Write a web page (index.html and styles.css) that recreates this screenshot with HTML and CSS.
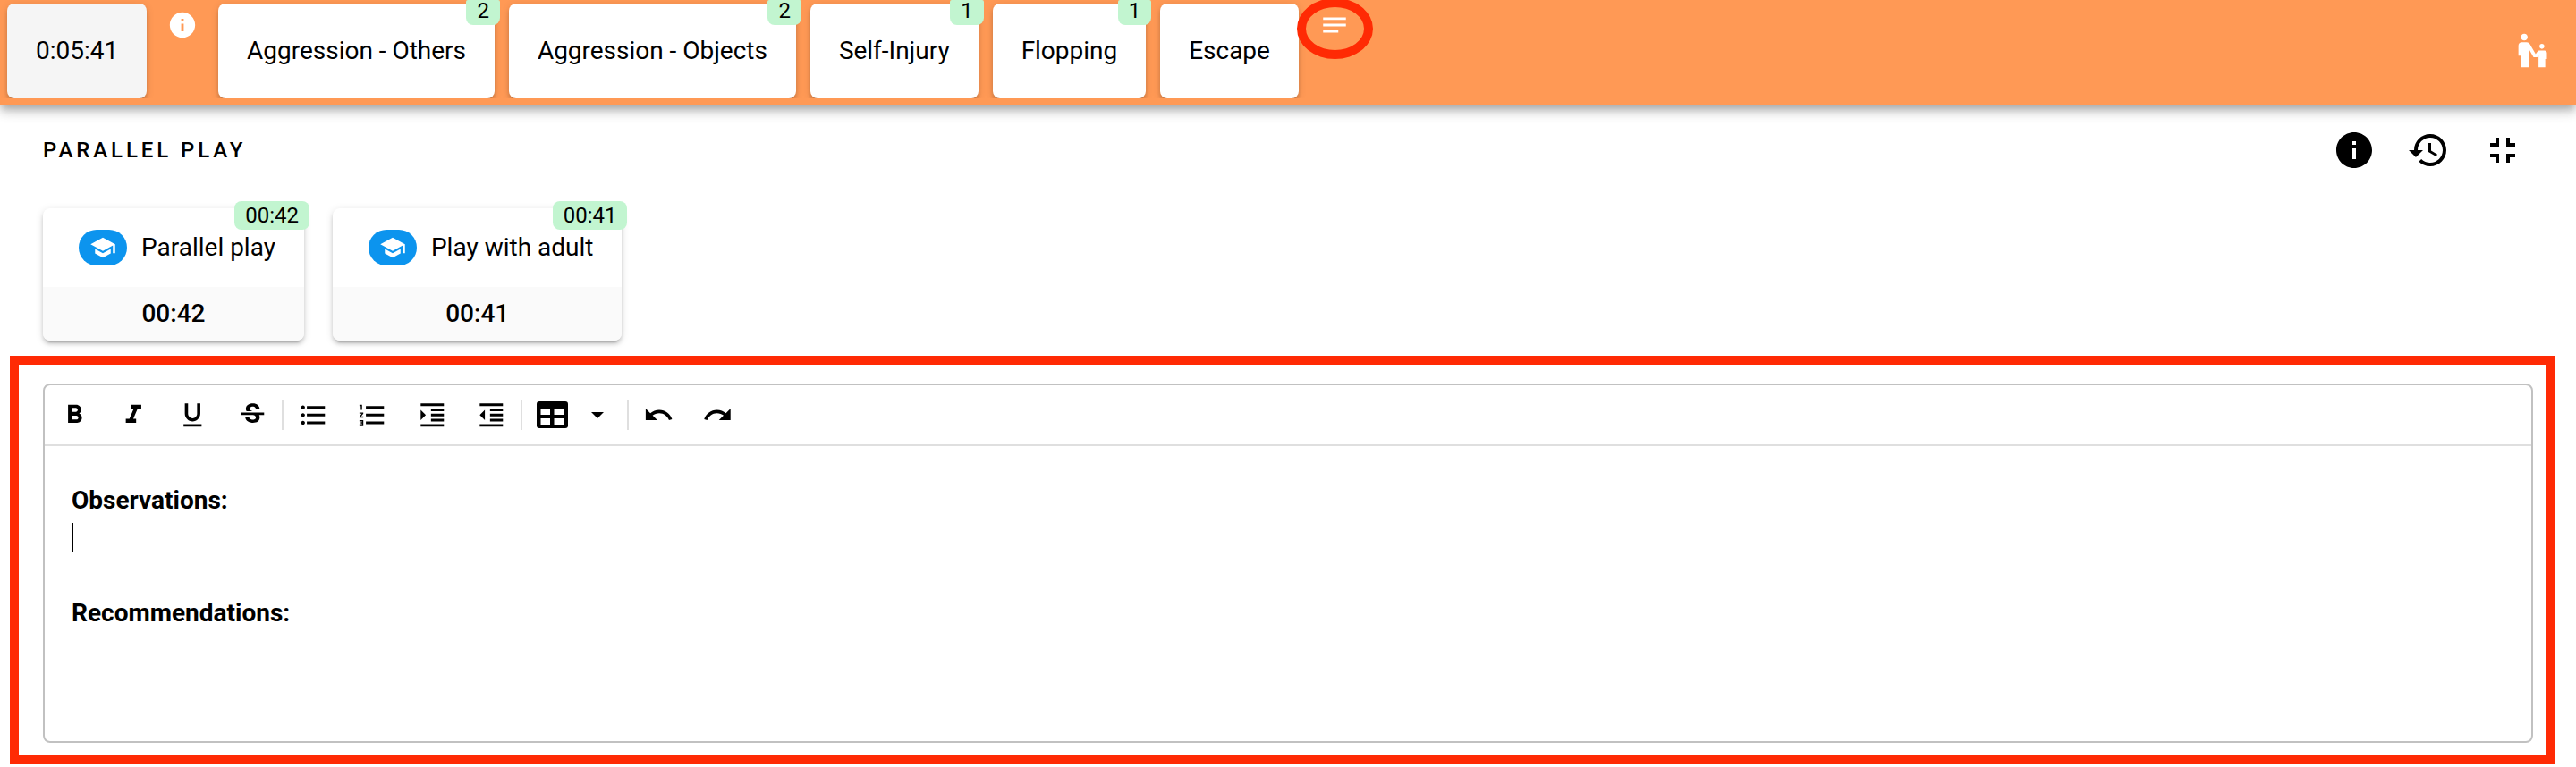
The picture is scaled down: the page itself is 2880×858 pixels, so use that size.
FILE: index.html
```html
<!DOCTYPE html>
<html lang="en">
<head>
    <meta charset="UTF-8">
    <meta name="viewport" content="width=device-width, initial-scale=1.0">
    <title>Session - Parallel Play</title>
    <link rel="stylesheet" href="styles.css">
</head>
<body>

<header class="topbar-wrap">
    <div class="topbar">
        <div class="behaviors">
            <button class="tile timer">0:05:41</button>
            <svg class="small-icon info-icon" viewBox="0 0 24 24"><path d="M12 2C6.48 2 2 6.48 2 12s4.48 10 10 10 10-4.48 10-10S17.52 2 12 2zm1 15h-2v-6h2v6zm0-8h-2V7h2v2z"/></svg>
            <button class="tile">Aggression - Others<span class="count">2</span></button>
            <button class="tile">Aggression - Objects<span class="count">2</span></button>
            <button class="tile">Self-Injury<span class="count">1</span></button>
            <button class="tile">Flopping<span class="count">1</span></button>
            <button class="tile">Escape</button>
            <div class="notes">
                <svg class="small-icon" viewBox="0 0 24 24"><path d="M21 11H3v2h18zM3 16h12v2H3zM21 6H3v2h18z"/></svg>
                <span class="circle-mark"></span>
            </div>
        </div>
        <svg class="guardian-icon" viewBox="0 0 24 24"><path d="M6.5 2c1.1 0 2 .9 2 2s-.9 2-2 2-2-.9-2-2 .9-2 2-2zM15.5 9.5c0 .83.67 1.5 1.5 1.5s1.5-.67 1.5-1.5S17.83 8 17 8s-1.5.67-1.5 1.5zM18.5 12h-2.84c-.58.01-1.14.32-1.45.86l-.92 1.32L9.72 8C9.35 7.37 8.69 7.01 8.01 7H5c-1.1 0-2 .9-2 2v6h1.5v7h5V11.61L12.03 16h2.2l.77-1.1V22h4v-5h1v-3.5c0-.82-.67-1.5-1.5-1.5z"/></svg>
    </div>
</header>

<main>
    <div class="section-head">
        <h2>PARALLEL PLAY</h2>
        <div class="section-actions">
            <svg viewBox="0 0 24 24"><path d="M12 2C6.48 2 2 6.48 2 12s4.48 10 10 10 10-4.48 10-10S17.52 2 12 2zm1 15h-2v-6h2v6zm0-8h-2V7h2v2z"/></svg>
            <svg viewBox="0 0 24 24"><path d="M13 3c-4.97 0-9 4.03-9 9H1l3.89 3.89.07.14L9 12H6c0-3.87 3.13-7 7-7s7 3.13 7 7-3.13 7-7 7c-1.93 0-3.68-.79-4.94-2.06l-1.42 1.42C8.27 19.99 10.51 21 13 21c4.97 0 9-4.03 9-9s-4.03-9-9-9zm-1 5v5l4.28 2.54.72-1.21-3.5-2.08V8H12z"/></svg>
            <svg viewBox="0 0 24 24"><path d="M5 16h3v3h2v-5H5v2zm3-8H5v2h5V5H8v3zm6 11h2v-3h3v-2h-5v5zm2-11V5h-2v5h5V8h-3z"/></svg>
        </div>
    </div>

    <div class="cards">
        <div class="card">
            <span class="badge">00:42</span>
            <div class="card-title">
                <span class="chip"><svg viewBox="0 0 24 24"><path d="M5 13.18v4L12 21l7-3.82v-4L12 17l-7-3.82zM12 3L1 9l11 6 9-4.91V17h2V9L12 3z"/></svg></span>
                <span class="card-name">Parallel play</span>
            </div>
            <div class="card-time">00:42</div>
        </div>
        <div class="card">
            <span class="badge">00:41</span>
            <div class="card-title">
                <span class="chip"><svg viewBox="0 0 24 24"><path d="M5 13.18v4L12 21l7-3.82v-4L12 17l-7-3.82zM12 3L1 9l11 6 9-4.91V17h2V9L12 3z"/></svg></span>
                <span class="card-name">Play with adult</span>
            </div>
            <div class="card-time">00:41</div>
        </div>
    </div>

    <div class="highlight">
        <div class="editor">
            <div class="toolbar">
                <button class="tool"><svg viewBox="0 0 24 24"><path d="M15.6 10.79c.97-.67 1.65-1.77 1.65-2.79 0-2.26-1.75-4-4-4H7v14h7.04c2.09 0 3.71-1.7 3.71-3.79 0-1.52-.86-2.82-2.15-3.42zM10 6.5h3c.83 0 1.5.67 1.5 1.5s-.67 1.5-1.5 1.5h-3v-3zm3.5 9H10v-3h3.5c.83 0 1.5.67 1.5 1.5s-.67 1.5-1.5 1.5z"/></svg></button>
                <button class="tool"><svg viewBox="0 0 24 24"><path d="M10 4v3h2.21l-3.42 8H6v3h8v-3h-2.21l3.42-8H18V4z"/></svg></button>
                <button class="tool"><svg viewBox="0 0 24 24"><path d="M12 17c3.31 0 6-2.69 6-6V3h-2.5v8c0 1.93-1.57 3.5-3.5 3.5S8.5 12.93 8.5 11V3H6v8c0 3.31 2.69 6 6 6zm-7 2v2h14v-2H5z"/></svg></button>
                <button class="tool"><svg viewBox="0 0 24 24"><path d="M7.24 8.75c-.26-.48-.39-1.03-.39-1.67 0-.61.13-1.16.4-1.67.26-.5.63-.93 1.11-1.29.48-.35 1.05-.63 1.7-.83.66-.19 1.39-.29 2.18-.29.81 0 1.54.11 2.21.34.66.22 1.23.54 1.69.94.47.4.83.88 1.08 1.43s.38 1.15.38 1.81h-3.01c0-.31-.05-.59-.15-.85-.09-.27-.24-.49-.44-.68-.2-.19-.45-.33-.75-.44-.3-.1-.66-.16-1.06-.16-.39 0-.74.04-1.03.13s-.53.21-.72.36c-.19.16-.34.34-.44.55-.1.21-.15.43-.15.66 0 .48.25.88.74 1.21.38.25.77.48 1.41.7H7.39c-.05-.08-.11-.17-.15-.25zM21 12v-2H3v2h9.62c.18.07.4.14.55.2.37.17.66.34.87.51s.35.36.43.57c.07.2.11.43.11.69 0 .23-.05.45-.14.66-.09.2-.23.38-.42.53-.19.15-.42.26-.71.35-.29.08-.63.13-1.01.13-.43 0-.83-.04-1.18-.13s-.66-.23-.91-.42c-.25-.19-.45-.44-.59-.75s-.25-.76-.25-1.21H6.4c0 .55.08 1.13.24 1.58s.37.85.65 1.21c.28.35.6.66.98.92.37.26.78.48 1.22.65.44.17.9.3 1.38.39.48.08.96.13 1.44.13.8 0 1.53-.09 2.18-.28s1.21-.45 1.67-.79c.46-.34.82-.77 1.07-1.27s.38-1.07.38-1.71c0-.6-.1-1.14-.31-1.61-.05-.11-.11-.23-.17-.33H21V12z"/></svg></button>
                <span class="divider"></span>
                <button class="tool"><svg viewBox="0 0 24 24"><path d="M4 10.5c-.83 0-1.5.67-1.5 1.5s.67 1.5 1.5 1.5 1.5-.67 1.5-1.5-.67-1.5-1.5-1.5zm0-6c-.83 0-1.5.67-1.5 1.5S3.17 7.5 4 7.5 5.5 6.83 5.5 6 4.83 4.5 4 4.5zm0 12c-.83 0-1.5.68-1.5 1.5s.68 1.5 1.5 1.5 1.5-.68 1.5-1.5-.67-1.5-1.5-1.5zM7 19h14v-2H7v2zm0-6h14v-2H7v2zm0-8v2h14V5H7z"/></svg></button>
                <button class="tool"><svg viewBox="0 0 24 24"><path d="M2 17h2v.5H3v1h1v.5H2v1h3v-4H2v1zm1-9h1V4H2v1h1v3zm-1 3h1.8L2 13.1v.9h3v-1H3.2L5 10.9V10H2v1zm5-6v2h14V5H7zm0 14h14v-2H7v2zm0-6h14v-2H7v2z"/></svg></button>
                <button class="tool"><svg viewBox="0 0 24 24"><path d="M3 21h18v-2H3v2zM3 8v8l4-4-4-4zm8 9h10v-2H11v2zM3 3v2h18V3H3zm8 6h10V7H11v2zm0 4h10v-2H11v2z"/></svg></button>
                <button class="tool"><svg viewBox="0 0 24 24"><path d="M11 17h10v-2H11v2zm-8-5l4 4V8l-4 4zm0 9h18v-2H3v2zM3 3v2h18V3H3zm8 6h10V7H11v2zm0 4h10v-2H11v2z"/></svg></button>
                <span class="divider"></span>
                <button class="tool"><svg class="table-icon" viewBox="0 0 35 30"><path fill-rule="evenodd" d="M3 0h29a3 3 0 0 1 3 3v24a3 3 0 0 1-3 3H3a3 3 0 0 1-3-3V3a3 3 0 0 1 3-3zM4.5 8v7H15V8zM19.5 8v7H30V8zM4.5 19v7H15v-7zM19.5 19v7H30v-7z"/></svg></button>
                <button class="tool tool-arrow"><svg class="arrow-icon" viewBox="0 0 14 7"><path d="M0 0h14L7 7z"/></svg></button>
                <span class="divider"></span>
                <button class="tool"><svg viewBox="0 0 24 24"><path d="M12.5 8c-2.65 0-5.05.99-6.9 2.6L2 7v9h9l-3.62-3.62c1.39-1.16 3.16-1.88 5.12-1.88 3.54 0 6.55 2.31 7.6 5.5l2.37-.78C21.08 11.03 17.15 8 12.5 8z"/></svg></button>
                <button class="tool"><svg viewBox="0 0 24 24"><path d="M18.4 10.6C16.55 8.99 14.15 8 11.5 8c-4.65 0-8.58 3.03-9.96 7.22L3.9 16c1.05-3.19 4.05-5.5 7.6-5.5 1.95 0 3.73.72 5.12 1.88L13 16h9V7l-3.6 3.6z"/></svg></button>
            </div>
            <div class="editor-body">
                <p>Observations:</p>
                <p><span class="cursor"></span></p>
                <p>Recommendations:</p>
            </div>
        </div>
    </div>
</main>

</body>
</html>
```
FILE: styles.css
```css
* {
    box-sizing: border-box;
}
body {
    margin: 0;
    height: 858px;
    overflow: hidden;
    background-color: #fff;
    color: #000;
    font-family: Roboto, sans-serif;
    font-size: 28px;
}
button {
    border: none;
    padding: 0;
    color: inherit;
    font: inherit;
    cursor: pointer;
}
svg {
    display: block;
    flex: none;
    fill: currentColor;
}

/* top bar */
.topbar-wrap {
    height: 138px;
    overflow: hidden;
}
.topbar {
    height: 118px;
    display: flex;
    justify-content: space-between;
    background-color: #ff9955;
    box-shadow: 0 4px 8px -2px rgba(0, 0, 0, 0.2), 0 8px 10px rgba(0, 0, 0, 0.14), 0 2px 20px rgba(0, 0, 0, 0.12);
}
.behaviors {
    display: flex;
    gap: 16px;
    height: 110px;
    padding: 4px 20px 0 8px;
    overflow: hidden;
}
.tile {
    position: relative;
    height: 106px;
    padding: 0 32px 2px;
    border-radius: 8px;
    background-color: #fff;
    letter-spacing: -0.02px;
    white-space: nowrap;
    box-shadow: 0 6px 2px -4px rgba(0, 0, 0, 0.2), 0 4px 4px rgba(0, 0, 0, 0.14), 0 2px 10px rgba(0, 0, 0, 0.12);
}
.timer {
    background-color: #f5f5f5;
}
.count {
    position: absolute;
    top: -4px;
    right: -6px;
    height: 28px;
    padding: 0 12px;
    border-radius: 2px 2px 8px 8px;
    background-color: #c2f5d0;
    font-size: 24px;
    line-height: 24px;
}
.small-icon {
    width: 34px;
    height: 34px;
    color: #fff;
}
.info-icon {
    margin: 7px 7px 0;
}
.notes {
    position: relative;
    padding: 7px 26px 0 7px;
}
.circle-mark {
    position: absolute;
    top: -6px;
    left: -18px;
    width: 85px;
    height: 68px;
    border: 10px solid #ff2a04;
    border-radius: 50%;
}
.guardian-icon {
    width: 45px;
    height: 45px;
    margin: 34px 25px 0 0;
    color: #fff;
}

/* section title */
.section-head {
    display: flex;
    justify-content: space-between;
    align-items: center;
    height: 60px;
    padding: 0 58px 0 48px;
}
.section-head h2 {
    margin: 0;
    font-size: 24px;
    font-weight: 500;
    letter-spacing: 3.9px;
}
.section-actions {
    display: flex;
    gap: 35px;
}
.section-actions svg {
    width: 48px;
    height: 48px;
}

/* target cards */
.cards {
    display: flex;
    gap: 32px;
    padding: 35px 48px 17px;
}
.card {
    position: relative;
    height: 148px;
    border-radius: 8px;
    background-color: #fff;
    box-shadow: 0 6px 2px -4px rgba(0, 0, 0, 0.2), 0 4px 4px rgba(0, 0, 0, 0.14), 0 2px 10px rgba(0, 0, 0, 0.12);
}
.badge {
    position: absolute;
    top: -8px;
    right: -6px;
    height: 32px;
    padding: 0 12px;
    border-radius: 8px;
    background-color: #c2f5d0;
    font-size: 24px;
    line-height: 32px;
}
.card-title {
    display: flex;
    align-items: center;
    gap: 16px;
    height: 88px;
    padding: 0 32px 0 40px;
    white-space: nowrap;
}
.card-name {
    padding-bottom: 2px;
}
.chip {
    display: flex;
    justify-content: center;
    align-items: center;
    width: 54px;
    height: 40px;
    border-radius: 20px;
    background-color: #0c94ee;
    color: #fff;
}
.chip svg {
    width: 30px;
    height: 30px;
}
.card-time {
    height: 60px;
    border-radius: 0 0 8px 8px;
    background-color: #fafafa;
    font-weight: 500;
    line-height: 60px;
    text-align: center;
}

/* notes editor */
.highlight {
    width: 2846px;
    height: 457px;
    margin-left: 11px;
    padding: 21px 15px 14px 27px;
    border: 10px solid #ff2a04;
}
.editor {
    height: 402px;
    border: 2px solid #c1c1c1;
    border-radius: 8px;
}
.toolbar {
    display: flex;
    align-items: center;
    height: 68px;
    border-bottom: 2px solid #dfdfdf;
}
.tool {
    display: flex;
    justify-content: center;
    align-items: center;
    width: 66.3px;
    height: 66px;
    background: none;
}
.tool svg {
    width: 34.6px;
    height: 34.6px;
}
.tool .table-icon {
    width: 35px;
    height: 30px;
}
.tool-arrow {
    width: 34px;
    margin-right: 16.5px;
}
.tool .arrow-icon {
    width: 14px;
    height: 7px;
}
.divider {
    width: 2px;
    height: 34px;
    background-color: #dfdfdf;
}
.editor-body {
    padding: 40px 30px;
    font-weight: 700;
    line-height: 42px;
}
.editor-body p {
    margin: 0;
}
.editor-body p:nth-child(2) {
    height: 84px;
}
.cursor {
    display: block;
    width: 2px;
    height: 37px;
    border-top: 4px solid #fff;
    background-color: #000;
}
```
